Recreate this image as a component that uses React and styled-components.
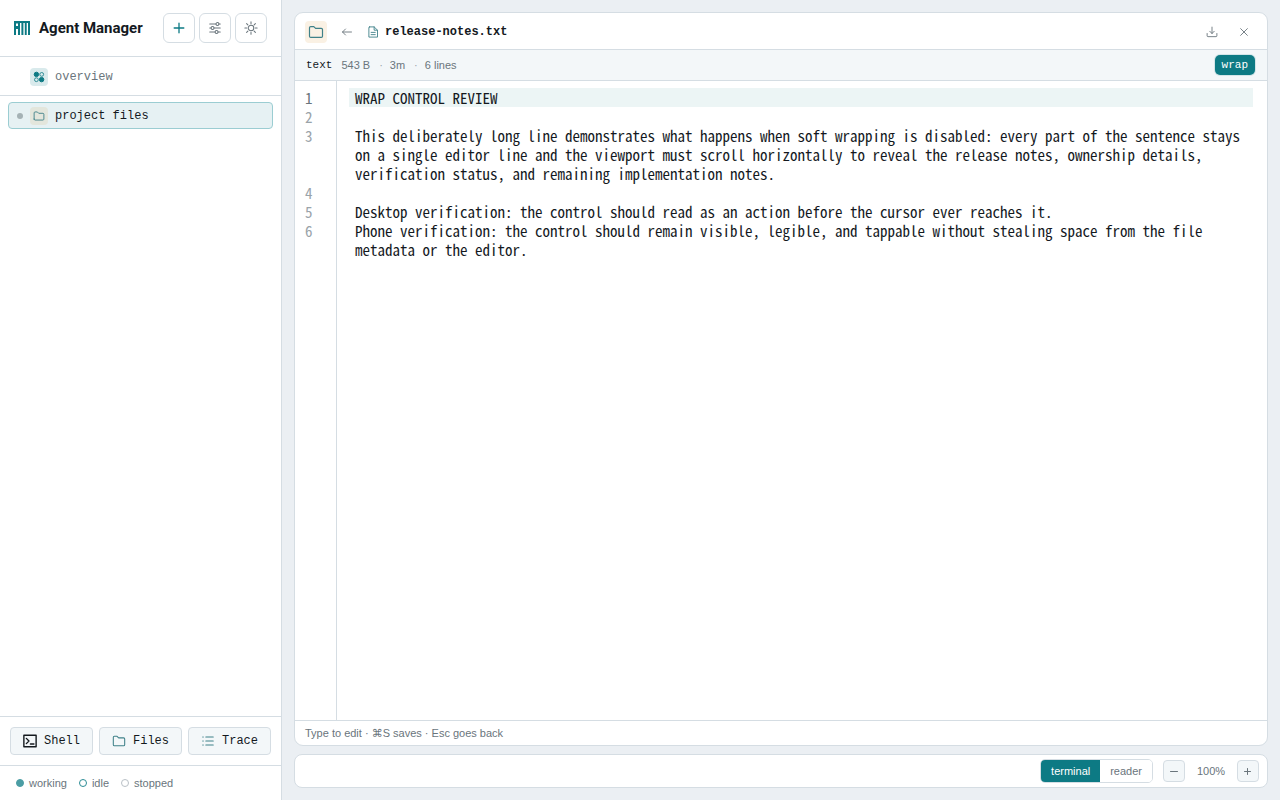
import React from "react";
import styled, { createGlobalStyle, css } from "styled-components";

const c = {
  page: "#ebeff3",
  line: "#d5dde3",
  soft: "#f3f7f9",
  text: "#14191e",
  muted: "#6a757c",
  faint: "#9aa3a9",
  teal: "#0d7a84",
  icon: "#3f8189",
};

const mono = `"Liberation Mono", monospace`;
const editorMono = `"Noto Sans Mono CJK SC", "Noto Sans Mono CJK JP", "Liberation Mono", monospace`;

const GlobalStyle = createGlobalStyle`
  *, *::before, *::after { box-sizing: border-box; }
  body {
    margin: 0;
    background: ${c.page};
    color: ${c.text};
    font: 11px/16px "Liberation Sans", "DejaVu Sans", sans-serif;
  }
  button { font: inherit; color: inherit; margin: 0; padding: 0; cursor: pointer; }
`;

const Shell = styled.div`
  display: flex;
  min-height: 100vh;
`;

const Sidebar = styled.aside`
  display: flex;
  flex-direction: column;
  flex: 0 0 282px;
  background: #fff;
  border-right: 1px solid ${c.line};
`;

const SidebarHeader = styled.header`
  display: flex;
  align-items: center;
  gap: 4px;
  height: 57px;
  padding: 0 14px;
  border-bottom: 1px solid ${c.line};
`;

const Brand = styled.h1`
  display: flex;
  flex: 1;
  align-items: center;
  gap: 9px;
  margin: 0;
  font: 700 15px/20px Roboto, "Liberation Sans", sans-serif;
  white-space: nowrap;
`;

const HeaderButton = styled.button`
  display: grid;
  place-items: center;
  width: 32px;
  height: 30px;
  background: #fff;
  border: 1px solid ${c.line};
  border-radius: 6px;
  color: ${(p) => (p.$accent ? c.teal : c.muted)};
`;

const OverviewSection = styled.div`
  padding: 6px 8px 5px;
  border-bottom: 1px solid ${c.line};
`;

const ProjectSection = styled.div`
  flex: 1;
  padding: 6px 8px;
`;

const NavLink = styled.a`
  display: flex;
  align-items: center;
  height: 27px;
  padding: 0 8px;
  border: 1px solid transparent;
  border-radius: 4px;
  color: ${c.muted};
  font: 12px/16px ${mono};
  text-decoration: none;
  ${(p) =>
    p.$active &&
    css`
      background: #e6f1f3;
      border-color: #9bcdd2;
      color: ${c.text};
    `}
`;

const Dot = styled.span`
  width: 6px;
  height: 6px;
  margin-right: 7px;
  border-radius: 50%;
  background: ${(p) => (p.$visible ? "#a5b2b5" : "transparent")};
`;

const IconTile = styled.span`
  display: grid;
  flex: none;
  place-items: center;
  width: ${(p) => p.$size}px;
  height: ${(p) => p.$size}px;
  border-radius: 4px;
  background: ${(p) => p.$bg};
  color: ${(p) => p.$color || c.icon};
`;

const NavLabel = styled.span`
  margin-left: 7px;
`;

const Actions = styled.div`
  display: grid;
  grid-template-columns: repeat(3, 1fr);
  gap: 6px;
  padding: 10px;
  border-top: 1px solid ${c.line};
`;

const ActionButton = styled.button`
  display: flex;
  align-items: center;
  justify-content: center;
  gap: 7px;
  height: 28px;
  background: ${c.soft};
  border: 1px solid ${c.line};
  border-radius: 4px;
  font: 12px/16px ${mono};
  color: ${(p) => (p.$dark ? c.text : c.icon)};
  span { color: ${c.text}; }
`;

const Legend = styled.ul`
  display: flex;
  align-items: center;
  gap: 12px;
  height: 35px;
  margin: 0;
  padding: 0 16px;
  list-style: none;
  border-top: 1px solid ${c.line};
  color: ${c.muted};
`;

const LegendItem = styled.li`
  display: flex;
  align-items: center;
  gap: 5px;
  &::before {
    content: "";
    width: 8px;
    height: 8px;
    border-radius: 50%;
    border: 1px solid ${(p) => p.$ring};
    background: ${(p) => p.$fill || "transparent"};
  }
`;

const Main = styled.main`
  display: flex;
  flex: 1;
  flex-direction: column;
  gap: 8px;
  min-width: 0;
  padding: 12px;
`;

const Panel = styled.section`
  display: flex;
  flex: 1;
  flex-direction: column;
  overflow: hidden;
  background: #fff;
  border: 1px solid ${c.line};
  border-radius: 9px;
`;

const PanelHeader = styled.header`
  display: flex;
  align-items: center;
  height: 37px;
  padding: 1px 10px 0;
  border-bottom: 1px solid ${c.line};
`;

const GhostButton = styled.button`
  display: grid;
  place-items: center;
  width: 26px;
  height: 26px;
  margin: 0 ${(p) => p.$gap || 0}px;
  background: none;
  border: 0;
  color: ${c.muted};
`;

const FileTitle = styled.h2`
  display: flex;
  flex: 1;
  align-items: center;
  gap: 6px;
  margin: 0;
  padding-top: 1px;
  font: 700 12px/16px ${mono};
  svg { color: ${c.icon}; }
`;

const HeaderTools = styled.div`
  display: flex;
  gap: 6px;
`;

const MetaBar = styled.div`
  display: flex;
  align-items: center;
  height: 31px;
  padding: 0 12px 0 11px;
  background: ${c.soft};
  border-bottom: 1px solid ${c.line};
  color: ${c.muted};
`;

const FileKind = styled.span`
  margin-right: 9px;
  color: ${c.text};
  font: 11px/16px ${mono};
`;

const MetaItem = styled.span`
  & + &::before {
    content: "·";
    margin: 0 7px 0 9px;
    color: ${c.faint};
  }
`;

const WrapButton = styled.button`
  height: 20px;
  margin-left: auto;
  padding: 0 7px;
  background: ${c.teal};
  border: 0;
  border-radius: 5px;
  box-shadow: 0 0 0 1px #d3e5e8;
  color: #fff;
  font: 11px/16px ${mono};
`;

const Editor = styled.div`
  display: flex;
  flex: 1;
  flex-direction: column;
  outline: none;
  font: 15px/19px ${editorMono};
`;

const EditorRow = styled.div`
  display: flex;
  flex: ${(p) => (p.$fill ? "1" : "none")};
  min-height: ${(p) => (p.$fill ? 0 : p.$pad ? 7 : 19)}px;
`;

const LineNumber = styled.span`
  flex: 0 0 42px;
  padding-left: 10px;
  border-right: 1px solid ${c.line};
  color: ${(p) => (p.$active ? c.muted : c.faint)};
  user-select: none;
`;

const LineText = styled.div`
  flex: 1;
  min-width: 0;
  margin: 0 14px 0 12px;
  padding: 0 6px;
  background: ${(p) => (p.$active ? "#ecf5f5" : "transparent")};
  overflow-wrap: anywhere;
`;

const StatusBar = styled.footer`
  padding: 4px 10px;
  border-top: 1px solid ${c.line};
  color: ${c.muted};
`;

const ViewBar = styled.div`
  display: flex;
  align-items: center;
  justify-content: flex-end;
  gap: 10px;
  height: 34px;
  padding: 0 8px;
  background: #fff;
  border: 1px solid ${c.line};
  border-radius: 8px;
`;

const Segmented = styled.div`
  display: flex;
  height: 24px;
  overflow: hidden;
  border: 1px solid ${c.line};
  border-radius: 5px;
`;

const Segment = styled.button`
  padding: 0 10px;
  border: 0;
  background: ${(p) => (p.$active ? c.teal : "#fff")};
  color: ${(p) => (p.$active ? "#fff" : c.muted)};
`;

const ZoomValue = styled.output`
  width: 32px;
  text-align: center;
  color: ${c.muted};
`;

const ZoomButton = styled.button`
  display: grid;
  place-items: center;
  width: 22px;
  height: 22px;
  background: ${c.soft};
  border: 1px solid ${c.line};
  border-radius: 4px;
  color: ${c.muted};
`;

const Icon = ({ size = 14, box = 16, width = 1.2, children }) => (
  <svg
    width={size}
    height={size}
    viewBox={`0 0 ${box} ${box}`}
    fill="none"
    stroke="currentColor"
    strokeWidth={width}
    strokeLinecap="round"
    strokeLinejoin="round"
    aria-hidden="true"
  >
    {children}
  </svg>
);

const Logo = () => (
  <svg width="16" height="14" viewBox="0 0 16 14" fill={c.teal} aria-hidden="true">
    <path d="M0 0H16V14H14V2H12.7V14H10.8V2H9.4V14H7.4V2H6V14H4V8H2V14H0ZM2 2.5V5H4V2.5Z" fillRule="evenodd" />
  </svg>
);

const FolderIcon = ({ size, width }) => (
  <Icon size={size} width={width}>
    <path d="M1.5 12.2V3.8c0-.7.5-1.2 1.2-1.2h3.1l1.8 1.8h5.7c.7 0 1.2.5 1.2 1.2v6.6c0 .7-.5 1.2-1.2 1.2H2.7c-.7 0-1.2-.5-1.2-1.2z" />
  </Icon>
);

const OverviewIcon = () => (
  <svg width="12" height="12" viewBox="0 0 12 12" fill="none" stroke="currentColor" aria-hidden="true">
    <circle cx="3.4" cy="3.4" r="2.2" fill="currentColor" />
    <circle cx="8.6" cy="8.6" r="2.2" fill="currentColor" />
    <circle cx="8.7" cy="3.4" r="1.9" strokeWidth=".8" />
    <circle cx="3.4" cy="8.7" r="1.9" strokeWidth=".8" />
  </svg>
);

const lines = [
  "WRAP CONTROL REVIEW",
  "",
  "This deliberately long line demonstrates what happens when soft wrapping is disabled: every part of the sentence stays on a single editor line and the viewport must scroll horizontally to reveal the release notes, ownership details, verification status, and remaining implementation notes.",
  "",
  "Desktop verification: the control should read as an action before the cursor ever reaches it.",
  "Phone verification: the control should remain visible, legible, and tappable without stealing space from the file metadata or the editor.",
];

export default function App() {
  return (
    <>
      <GlobalStyle />
      <Shell>
        <Sidebar>
          <SidebarHeader>
            <Brand>
              <Logo />
              Agent Manager
            </Brand>
            <HeaderButton $accent aria-label="New agent">
              <Icon width={1.5}><path d="M8 2.5v11M2.5 8h11" /></Icon>
            </HeaderButton>
            <HeaderButton aria-label="Settings">
              <Icon>
                <path d="M2 3.5h7M12.5 3.5H14M2 8h1.5M7 8h7M2 12.5h6M11.5 12.5H14" />
                <circle cx="10.8" cy="3.5" r="1.7" />
                <circle cx="5.2" cy="8" r="1.7" />
                <circle cx="9.8" cy="12.5" r="1.7" />
              </Icon>
            </HeaderButton>
            <HeaderButton aria-label="Theme">
              <Icon>
                <circle cx="8" cy="8" r="3.2" />
                <path d="M8 1v2M8 13v2M1 8h2M13 8h2M3 3l1.4 1.4M11.6 11.6L13 13M13 3l-1.4 1.4M4.4 11.6L3 13" />
              </Icon>
            </HeaderButton>
          </SidebarHeader>

          <OverviewSection>
            <NavLink href="#overview">
              <Dot />
              <IconTile $size={18} $bg="#d9eaec" $color={c.teal}><OverviewIcon /></IconTile>
              <NavLabel>overview</NavLabel>
            </NavLink>
          </OverviewSection>
          <ProjectSection>
            <NavLink href="#files" $active aria-current="page">
              <Dot $visible />
              <IconTile $size={18} $bg="#e3e6dc"><FolderIcon size={12} /></IconTile>
              <NavLabel>project files</NavLabel>
            </NavLink>
          </ProjectSection>

          <Actions>
            <ActionButton $dark>
              <Icon size={14} width={1.6}>
                <path d="M1 1.5h14v13H1zM3.8 5l3 3-3 3M8.5 11.5h4" />
              </Icon>
              <span>Shell</span>
            </ActionButton>
            <ActionButton>
              <FolderIcon size={14} />
              <span>Files</span>
            </ActionButton>
            <ActionButton>
              <Icon size={14}>
                <path d="M5.5 3.5H14M5.5 8H14M5.5 12.5H14M2 3.5h.6M2 8h.6M2 12.5h.6" />
              </Icon>
              <span>Trace</span>
            </ActionButton>
          </Actions>
          <Legend>
            <LegendItem $ring="#4b9da4" $fill="#4b9da4">working</LegendItem>
            <LegendItem $ring="#2b8c95">idle</LegendItem>
            <LegendItem $ring="#b9c0c6">stopped</LegendItem>
          </Legend>
        </Sidebar>

        <Main>
          <Panel>
            <PanelHeader>
              <IconTile $size={22} $bg="#faf1e4"><FolderIcon size={16} /></IconTile>
              <GhostButton $gap={7} aria-label="Back">
                <Icon size={12}><path d="M14 8H2M6 4L2 8l4 4" /></Icon>
              </GhostButton>
              <FileTitle>
                <Icon size={12}>
                  <path d="M3.5 1.2h6L14 5.6v9.2H2.5V2.2c0-.6.4-1 1-1zM9.5 1.2v4.4H14M5.5 8.5h5.5M5.5 11.5h5.5" />
                </Icon>
                release-notes.txt
              </FileTitle>
              <HeaderTools>
                <GhostButton aria-label="Download">
                  <Icon size={12}><path d="M8 1.5v8.5M5 7l3 3 3-3M1.5 10v3.2c0 .6.4 1 1 1h11c.6 0 1-.4 1-1V10" /></Icon>
                </GhostButton>
                <GhostButton aria-label="Close">
                  <Icon size={12}><path d="M3.5 3.5l9 9M12.5 3.5l-9 9" /></Icon>
                </GhostButton>
              </HeaderTools>
            </PanelHeader>
            <MetaBar>
              <FileKind>text</FileKind>
              <MetaItem>543 B</MetaItem>
              <MetaItem>3m</MetaItem>
              <MetaItem>6 lines</MetaItem>
              <WrapButton aria-pressed="true">wrap</WrapButton>
            </MetaBar>
            <Editor
              role="textbox"
              aria-multiline="true"
              aria-label="release-notes.txt"
              contentEditable
              suppressContentEditableWarning
              spellCheck={false}
            >
              <EditorRow $pad contentEditable={false}><LineNumber /></EditorRow>
              {lines.map((line, i) => (
                <EditorRow key={i}>
                  <LineNumber $active={i === 0} contentEditable={false}>{i + 1}</LineNumber>
                  <LineText $active={i === 0}>{line}</LineText>
                </EditorRow>
              ))}
              <EditorRow $fill contentEditable={false}><LineNumber /></EditorRow>
            </Editor>
            <StatusBar>Type to edit · ⌘S saves · Esc goes back</StatusBar>
          </Panel>
          <ViewBar>
            <Segmented role="group" aria-label="View">
              <Segment $active aria-pressed="true">terminal</Segment>
              <Segment aria-pressed="false">reader</Segment>
            </Segmented>
            <ZoomButton aria-label="Zoom out">
              <Icon size={8} box={8} width={1}><path d="M.5 4.5h7" /></Icon>
            </ZoomButton>
            <ZoomValue>100%</ZoomValue>
            <ZoomButton aria-label="Zoom in">
              <Icon size={8} box={8} width={1}><path d="M.5 4.5h6M3.5 1.5v6" /></Icon>
            </ZoomButton>
          </ViewBar>
        </Main>
      </Shell>
    </>
  );
}
